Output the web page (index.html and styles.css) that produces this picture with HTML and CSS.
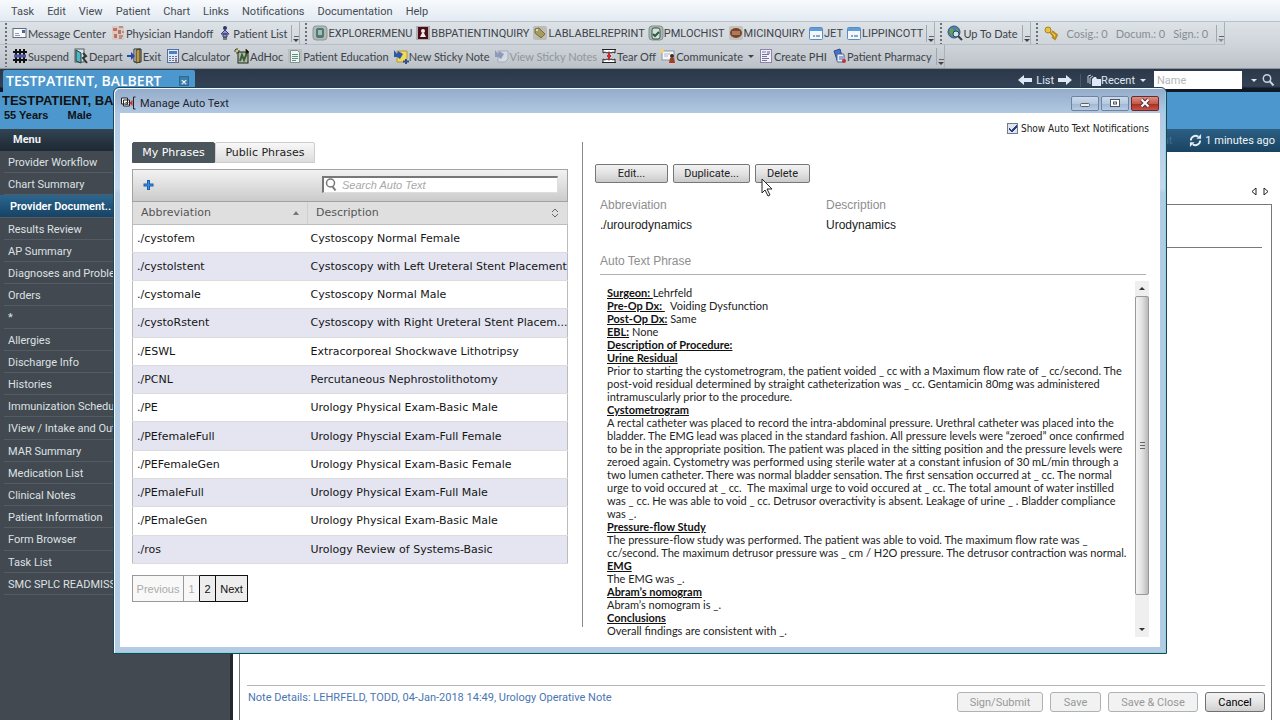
FILE: index.html
```
<!DOCTYPE html>
<html lang="en">
<head>
    <meta charset="UTF-8">
    <meta name="viewport" content="width=device-width, initial-scale=1.0">
    <title>Manage Auto Text</title>
    <link rel="stylesheet" href="styles.css">
</head>
<body>

<nav class="menubar">
    <a href="#">Task</a>
    <a href="#">Edit</a>
    <a href="#">View</a>
    <a href="#">Patient</a>
    <a href="#">Chart</a>
    <a href="#">Links</a>
    <a href="#">Notifications</a>
    <a href="#">Documentation</a>
    <a href="#">Help</a>
</nav>

<div class="toolbar">
    <div class="group">
        <button class="tool"><svg viewBox="0 0 16 16"><rect x="1" y="3.500" width="13" height="9" fill="#f8fafc" stroke="#5f6b80"/><path d="M3 10.500h5M3 8.500h4" stroke="#8d9bb5"/><rect x="10" y="5" width="3" height="3" fill="#4a66a0"/></svg>Message Center</button>
        <button class="tool"><svg viewBox="0 0 16 16"><rect x="2" y="1" width="12" height="14" fill="#d9c9c4"/><path d="M3 3h4v3H3zM8 5h3v4H8zM4 9h3v4H4z" fill="#c0705e"/><path d="M9 2h4M12 7h2M9 11h4M9 13h3" stroke="#8a5c56"/></svg>Physician Handoff</button>
        <button class="tool"><svg viewBox="0 0 16 16"><circle cx="8" cy="3" r="2" fill="#30336e"/><path d="M8 5l4 4H4zM6 9h4v3H6z" fill="#8f95d8" stroke="#3b4070"/><path d="M7 12v3M9 12v3" stroke="#222"/></svg>Patient List</button>
        <span class="more"><i class="caret"></i></span>
    </div>
    <div class="group links">
        <button class="tool"><svg viewBox="0 0 16 16"><rect x="1" y="1" width="14" height="14" rx="3" fill="#b3b9b9" stroke="#8d9595"/><rect x="4" y="3" width="8" height="10" rx="2" fill="#4f7a74"/><rect x="6" y="5" width="4" height="5" fill="#9fc0b6"/></svg>EXPLORERMENU</button>
        <button class="tool"><svg viewBox="0 0 16 16"><rect x="1" y="1" width="14" height="14" fill="#b1aeb0"/><rect x="3" y="2" width="10" height="12" fill="#4b0e16"/><circle cx="8" cy="6" r="2" fill="#eee"/><path d="M5 12l2-4h2l2 4z" fill="#eee"/></svg>BBPATIENTINQUIRY</button>
        <button class="tool"><svg viewBox="0 0 16 16"><rect x="1" y="1" width="14" height="14" rx="2" fill="#bdbdb8"/><path d="M3 4l4-1 6 6-4 4-6-5z" fill="#a59b5c" stroke="#77703c"/><circle cx="5" cy="5" r="1" fill="#eee"/></svg>LABLABELREPRINT</button>
        <button class="tool"><svg viewBox="0 0 16 16"><rect x="1" y="1" width="14" height="14" rx="3" fill="#aeb9b3" stroke="#83918a"/><rect x="4" y="3" width="8" height="11" rx="2" fill="#d5e2da" stroke="#355548"/><path d="M5 9l2 2 4-4" fill="none" stroke="#2c5a46" stroke-width="2"/></svg>PMLOCHIST</button>
        <button class="tool"><svg viewBox="0 0 16 16"><rect x="1" y="1" width="14" height="14" rx="2" fill="#c5c1bd"/><ellipse cx="8" cy="8" rx="6" ry="5" fill="#7a4429"/><path d="M4 7h8M4 9h8" stroke="#dbb291"/></svg>MICINQUIRY</button>
        <button class="tool"><svg viewBox="0 0 16 16"><rect x="1.500" y="2.500" width="13" height="12" rx="1" fill="#f2f7fc" stroke="#5a8cc4"/><path d="M2 3h12v3H2z" fill="#5e9ddb"/><path d="M5 11h2M8 11h4" stroke="#8fa5bd" stroke-width="2"/></svg>JET</button>
        <button class="tool"><svg viewBox="0 0 16 16"><rect x="1.500" y="2.500" width="13" height="12" rx="1" fill="#f2f7fc" stroke="#5a8cc4"/><path d="M2 3h12v3H2z" fill="#5e9ddb"/><path d="M5 11h2M8 11h4" stroke="#8fa5bd" stroke-width="2"/></svg>LIPPINCOTT</button>
        <span class="more"><i class="caret"></i></span>
    </div>
    <div class="group">
        <button class="tool"><svg viewBox="0 0 16 16"><circle cx="7" cy="7" r="6" fill="#4b7fb5" stroke="#375a6e"/><path d="M3 4c3-2 4 0 3 2s3 2 1 5c-3 0-5-3-4-7zM9 3l3 3-2 2z" fill="#62a34a"/><circle cx="9" cy="9" r="3" fill="#cfe4f0" stroke="#33414f"/><path d="M11 11l4 4" stroke="#33414f" stroke-width="2"/></svg>Up To Date</button>
        <span class="more"><i class="caret"></i></span>
    </div>
    <div class="group signs">
        <svg viewBox="0 0 16 16"><circle cx="5" cy="5" r="3" fill="#e9c33d" stroke="#a8811d"/><path d="M7 7l4 5M9 6l5 4-2 4-3-2" fill="#f4d55b" stroke="#b68c22" stroke-width="2"/></svg>
        <span>Cosig.: 0</span>
        <span>Docum.: 0</span>
        <span>Sign.: 0</span>
        <span class="more"><i class="caret"></i></span>
    </div>
</div>

<div class="toolbar lower">
    <div class="group">
        <button class="tool"><svg viewBox="0 0 16 16"><path d="M4 1v14M8 1v14M12 1v14M1 4h14M1 12h14" stroke="#111" stroke-width="2"/><path d="M2 8h12" stroke="#4c54a8" stroke-width="3"/></svg>Suspend</button>
        <button class="tool"><svg viewBox="0 0 16 16"><rect x="2" y="1" width="9" height="13" fill="#d8e6e8" stroke="#545b60"/><path d="M3 2l5 3v10l-5-2z" fill="#4fb7bd" stroke="#1d3d44"/><path d="M10 5l3 3-3 2 4 5" fill="none" stroke="#333" stroke-width="2"/></svg>Depart</button>
        <button class="tool"><svg viewBox="0 0 16 16"><path d="M7 1h7v13H7z" fill="#fff" stroke="#222"/><path d="M9 2l4-1v13l-4 1z" fill="#b99b38" stroke="#333"/><path d="M0 7h4V4l4 4-4 4V9H0z" fill="#2749ad"/></svg>Exit</button>
        <button class="tool"><svg viewBox="0 0 16 16"><rect x="2.500" y="1.500" width="11" height="13" fill="#dfe8f5" stroke="#54719d"/><path d="M4 3h8v3H4z" fill="#4f7fc0"/><path d="M4 8.500h8M4 10.500h8M4 12.500h8" stroke="#5877a5" stroke-dasharray="2 1"/><path d="M10 12.500h2" stroke="#cf3b30" stroke-width="2"/></svg>Calculator</button>
        <button class="tool"><svg viewBox="0 0 16 16"><rect x="4" y="4" width="10" height="11" fill="#a9bd9d" stroke="#222"/><path d="M6 13l2-6 2 5 3-7" fill="none" stroke="#3b5f3c" stroke-width="2"/><path d="M0 3h6M3 0v6M1 1l4 4M12 1l3 3-3 2z" stroke="#3a3f1c"/><circle cx="3" cy="3" r="1" fill="#fff06a"/></svg>AdHoc</button>
        <button class="tool"><svg viewBox="0 0 16 16"><path d="M1 1h14v14H1z" fill="#b9bfc1"/><path d="M3.500 2.500h7l2 2v10h-9z" fill="#eef5f2" stroke="#82918c"/><path d="M5 6.500h6M5 8.500h6M5 10.500h6M5 12.500h4" stroke="#5e8f83"/></svg>Patient Education</button>
        <button class="tool"><svg viewBox="0 0 16 16"><path d="M4 3h10v8l-3 3H4z" fill="#f0d95c" stroke="#b09a34"/><path d="M1 2l3 4 1-3 5 3-3 5-3-2-3 0z" fill="#2c57ad"/><path d="M13 11v5M10 13.500h6" stroke="#31518e" stroke-width="2"/></svg>New Sticky Note</button>
        <button class="tool" disabled><svg viewBox="0 0 16 16"><path d="M4 3h10v8l-3 3H4z" fill="#d5dae4" stroke="#a4adbd"/><path d="M1 2l3 4 1-3 5 3-3 5-3-2-3 0z" fill="#8e9bb8"/></svg>View Sticky Notes</button>
        <button class="tool"><svg viewBox="0 0 16 16"><path d="M1 1.500h14M1 14.500h14M2 2v3l2-1 2 1 2-1 2 1 2-1 2 1V2M2 14v-3l2 1 2-1 2 1 2-1 2 1 2-1v3" fill="#fff" stroke="#222"/><path d="M8 5v6M6 8h4" stroke="#d4232b" stroke-width="2"/></svg>Tear Off</button>
        <button class="tool"><svg viewBox="0 0 16 16"><rect x="2" y="3" width="12" height="9" fill="#f7f7f7" stroke="#8493a8"/><path d="M4 6h6M4 8h4" stroke="#aab4c6"/><circle cx="2" cy="3" r="2" fill="#f5d56c"/><circle cx="12" cy="8" r="2" fill="#3d2b22"/><path d="M9 15l1-5h4l1 5z" fill="#a23c24"/></svg>Communicate <i class="caret"></i></button>
        <button class="tool"><svg viewBox="0 0 16 16"><rect x="2.500" y="1.500" width="11" height="13" fill="#f1f0f8" stroke="#8885a8"/><path d="M4 4h4M4 6.500h7M4 8.500h5M4 10.500h7M4 12.500h5" stroke="#77739c"/><path d="M9 3h3v3H9z" fill="#a8a5cc"/></svg>Create PHI</button>
        <button class="tool"><svg viewBox="0 0 16 16"><path d="M3 3l6-2 2 7-5 4z" fill="#4673c8" stroke="#2e4c8e"/><rect x="6" y="6" width="7" height="8" rx="1" fill="#e8eef8" stroke="#4a62a0"/><path d="M8 9h4M8 11h4" stroke="#4a62a0"/><circle cx="13" cy="13" r="2" fill="#bc3434"/></svg>Patient Pharmacy</button>
        <span class="more"><i class="caret"></i></span>
    </div>
</div>

<header class="chartbar">
    <div class="patient-tab">TESTPATIENT, BALBERT <button class="tab-close" aria-label="Close chart">×</button></div>
    <div class="chart-nav">
        <button aria-label="Previous patient"><svg viewBox="0 0 14 12"><path d="M0 6l6-5v3h8v4H6v3z" fill="#dfe8f2"/></svg></button>
        <a href="#">List</a>
        <button aria-label="Next patient"><svg viewBox="0 0 14 12"><path d="M14 6L8 1v3H0v4h8v3z" fill="#dfe8f2"/></svg></button>
        <button class="recent"><svg viewBox="0 0 14 12"><path d="M1 9V2l3-1M3 10V4l3-2" fill="none" stroke="#c7d3e0"/><path d="M5 5l2-2h2l1 2h4v7H5z" fill="#dfe8f2"/></svg>Recent <i class="caret"></i></button>
        <input class="name-search" type="text" placeholder="Name" aria-label="Name">
        <i class="caret"></i>
        <button aria-label="Search"><svg viewBox="0 0 14 12"><circle cx="6" cy="4.500" r="3.700" fill="none" stroke="#c9d4e1" stroke-width="1.500"/><path d="M8.500 7l4 4.500" stroke="#c9d4e1" stroke-width="2"/></svg></button>
    </div>
</header>

<section class="banner">
    <div class="banner-name">TESTPATIENT, BALBERT</div>
    <div class="banner-info"><span>55 Years</span><span>Male</span></div>
</section>

<div class="workspace">
    <aside class="sidebar">
        <h2>Menu</h2>
        <ul>
            <li><a href="#">Provider Workflow</a></li>
            <li><a href="#">Chart Summary</a></li>
            <li class="current"><a href="#">Provider Document..</a></li>
            <li><a href="#">Results Review</a></li>
            <li><a href="#">AP Summary</a></li>
            <li><a href="#">Diagnoses and Problems</a></li>
            <li><a href="#">Orders</a></li>
            <li><a href="#">*</a></li>
            <li><a href="#">Allergies</a></li>
            <li><a href="#">Discharge Info</a></li>
            <li><a href="#">Histories</a></li>
            <li><a href="#">Immunization Schedule</a></li>
            <li><a href="#">IView / Intake and Output</a></li>
            <li><a href="#">MAR Summary</a></li>
            <li><a href="#">Medication List</a></li>
            <li><a href="#">Clinical Notes</a></li>
            <li><a href="#">Patient Information</a></li>
            <li><a href="#">Form Browser</a></li>
            <li><a href="#">Task List</a></li>
            <li><a href="#">SMC SPLC READMISSION</a></li>
        </ul>
    </aside>
    <main class="chart">
        <div class="refresh">
            <span class="print">nt</span>
            <svg viewBox="0 0 14 14"><path d="M2 7a5 5 0 0 1 8-4M12 7a5 5 0 0 1-8 4" fill="none" stroke="#e4edf4" stroke-width="2"/><path d="M8 5h5V0zM6 9H1v5z" fill="#e4edf4"/></svg>
            1 minutes ago
        </div>
        <div class="pane-arrows">
            <svg viewBox="0 0 6 9"><path d="M5 1v7L1 4.500z" fill="none" stroke="#222"/></svg>
            <svg viewBox="0 0 6 9"><path d="M1 1v7l4-3.500z" fill="none" stroke="#222"/></svg>
        </div>
        <div class="note">
            <div class="note-head"></div>
            <footer class="note-foot">
                <p>Note Details: LEHRFELD, TODD, 04-Jan-2018 14:49, Urology Operative Note</p>
                <div class="note-actions">
                    <button disabled class="w-sign">Sign/Submit</button>
                    <button disabled class="w-save">Save</button>
                    <button disabled class="w-close">Save &amp; Close</button>
                    <button class="w-cancel">Cancel</button>
                </div>
            </footer>
        </div>
    </main>
</div>

<div class="dialog" role="dialog" aria-labelledby="dialog-title">
    <div class="titlebar">
        <svg viewBox="0 0 16 14"><path d="M1 2h6v6H1zM3 4h6v6H3z" fill="#fff" stroke="#222"/><path d="M5 6.500h3M5 8.500h3" stroke="#555"/><path d="M9 7l3-3v6z" fill="#d3272f"/><path d="M15 1h-2v12h2" fill="none" stroke="#222"/></svg>
        <h1 id="dialog-title">Manage Auto Text</h1>
        <button class="win" aria-label="Minimize"><svg viewBox="0 0 12 10"><rect x="1.500" y="5.500" width="9" height="3" rx="1" fill="#eee" stroke="#59616d"/></svg></button>
        <button class="win" aria-label="Maximize"><svg viewBox="0 0 12 10"><rect x="1.500" y="1.500" width="9" height="7" fill="#fff" stroke="#4c545f"/><rect x="4.500" y="4" width="3" height="2" fill="#fff" stroke="#4c545f"/></svg></button>
        <button class="win close" aria-label="Close"><svg viewBox="0 0 12 10"><path d="M2.500 1.500l7 7M9.500 1.500l-7 7" stroke="#5a3338" stroke-width="4"/><path d="M2.500 1.500l7 7M9.500 1.500l-7 7" stroke="#fff" stroke-width="2"/></svg></button>
    </div>
    <div class="dialog-body">
        <section class="phrases">
            <div class="tabs">
                <button class="tab active">My Phrases</button>
                <button class="tab">Public Phrases</button>
            </div>
            <div class="phrase-tools">
                <button class="add" aria-label="Add phrase"><svg viewBox="0 0 12 12"><path d="M6 1v10M1 6h10" stroke="#1c5fae" stroke-width="3"/><path d="M6 2v8M2 6h8" stroke="#3f8fe0"/></svg></button>
                <label class="search">
                    <svg viewBox="0 0 14 14"><circle cx="6.500" cy="5" r="4" fill="none" stroke="#777" stroke-width="1.500"/><path d="M8.500 8.500l3 4" stroke="#777" stroke-width="2"/></svg>
                    <input type="text" placeholder="Search Auto Text">
                </label>
            </div>
            <table>
                <thead>
                    <tr>
                        <th class="col-abbr"><div>Abbreviation <i class="sort-up"></i></div></th>
                        <th><div>Description <svg viewBox="0 0 8 12"><path d="M1 5l3-3 3 3M1 7l3 3 3-3" fill="none" stroke="#666"/></svg></div></th>
                    </tr>
                </thead>
                <tbody>
                    <tr><td>./cystofem</td><td>Cystoscopy Normal Female</td></tr>
                    <tr><td>./cystolstent</td><td>Cystoscopy with Left Ureteral Stent Placement</td></tr>
                    <tr><td>./cystomale</td><td>Cystoscopy Normal Male</td></tr>
                    <tr><td>./cystoRstent</td><td>Cystoscopy with Right Ureteral Stent Placem...</td></tr>
                    <tr><td>./ESWL</td><td>Extracorporeal Shockwave Lithotripsy</td></tr>
                    <tr><td>./PCNL</td><td>Percutaneous Nephrostolithotomy</td></tr>
                    <tr><td>./PE</td><td>Urology Physical Exam-Basic Male</td></tr>
                    <tr><td>./PEfemaleFull</td><td>Urology Physcial Exam-Full Female</td></tr>
                    <tr><td>./PEFemaleGen</td><td>Urology Physical Exam-Basic Female</td></tr>
                    <tr><td>./PEmaleFull</td><td>Urology Physical Exam-Full Male</td></tr>
                    <tr><td>./PEmaleGen</td><td>Urology Physical Exam-Basic Male</td></tr>
                    <tr><td>./ros</td><td>Urology Review of Systems-Basic</td></tr>
                </tbody>
            </table>
            <div class="pager">
                <button class="off prev">Previous</button>
                <button class="off">1</button>
                <button>2</button>
                <button class="next">Next</button>
            </div>
        </section>

        <section class="detail">
            <label class="notify"><input type="checkbox" checked> Show Auto Text Notifications</label>
            <div class="actions">
                <button class="w-edit">Edit...</button>
                <button class="w-dup">Duplicate...</button>
                <button class="w-del">Delete</button>
            </div>
            <dl>
                <div><dt>Abbreviation</dt><dd>./urourodynamics</dd></div>
                <div><dt>Description</dt><dd>Urodynamics</dd></div>
            </dl>
            <h2>Auto Text Phrase</h2>
            <div class="phrase">
                <div class="phrase-text">
                    <p><b>Surgeon: </b>Lehrfeld</p>
                    <p><b>Pre-Op Dx:&nbsp;</b>&nbsp; Voiding Dysfunction</p>
                    <p><b>Post-Op Dx:</b> Same</p>
                    <p><b>EBL:</b> None</p>
                    <p><b>Description of Procedure:</b></p>
                    <p><b>Urine Residual</b></p>
                    <p>Prior to starting the cystometrogram, the patient voided _ cc with a Maximum flow rate of _ cc/second. The<br>
                    post-void residual determined by straight catheterization was _ cc. Gentamicin 80mg was administered<br>
                    intramuscularly prior to the procedure.</p>
                    <p><b>Cystometrogram</b></p>
                    <p>A rectal catheter was placed to record the intra-abdominal pressure. Urethral catheter was placed into the<br>
                    bladder. The EMG lead was placed in the standard fashion. All pressure levels were “zeroed” once confirmed<br>
                    to be in the appropriate position. The patient was placed in the sitting position and the pressure levels were<br>
                    zeroed again. Cystometry was performed using sterile water at a constant infusion of 30 mL/min through a<br>
                    two lumen catheter. There was normal bladder sensation. The first sensation occurred at _ cc. The normal<br>
                    urge to void occured at _ cc.&nbsp; The maximal urge to void occured at _ cc. The total amount of water instilled<br>
                    was _ cc. He was able to void _ cc. Detrusor overactivity is absent. Leakage of urine _ . Bladder compliance<br>
                    was _.</p>
                    <p><b>Pressure-flow Study</b></p>
                    <p>The pressure-flow study was performed. The patient was able to void. The maximum flow rate was _<br>
                    cc/second. The maximum detrusor pressure was _ cm / H2O pressure. The detrusor contraction was normal.</p>
                    <p><b>EMG</b></p>
                    <p>The EMG was _.</p>
                    <p><b>Abram’s nomogram</b></p>
                    <p>Abram’s nomogram is _.</p>
                    <p><b>Conclusions</b></p>
                    <p>Overall findings are consistent with _.</p>
                </div>
                <div class="scroll">
                    <i class="arrow up"></i>
                    <div class="thumb"></div>
                    <i class="arrow down"></i>
                </div>
            </div>
        </section>
    </div>
</div>

<svg class="pointer" viewBox="0 0 12 19"><path d="M1 1v14l3-3 3 6 2-1-3-6h5z" fill="#fff" stroke="#222"/></svg>

</body>
</html>
```

FILE: styles.css
```
* {
    box-sizing: border-box;
}
body {
    margin: 0;
    min-height: 100vh;
    display: flex;
    flex-direction: column;
    position: relative;
    overflow: hidden;
    font-family: Roboto, "Open Sans", sans-serif;
    font-size: 11px;
    background: #fff;
}
a {
    color: inherit;
    text-decoration: none;
}
button {
    font: inherit;
    color: inherit;
    padding: 0;
    margin: 0;
    border: none;
    background: none;
}
h1, h2, p, ul, dl, dd {
    margin: 0;
    padding: 0;
}
svg {
    flex: none;
}

/* menus and toolbars */
.menubar {
    display: flex;
    gap: 13px;
    height: 22px;
    padding-left: 11px;
    line-height: 24px;
    color: #454b52;
    background: linear-gradient(#f7fafd, #e3eaf2);
    border-bottom: 1px solid #b9c0c7;
}
.toolbar {
    display: flex;
    height: 23px;
    font-family: Lato, Roboto, sans-serif;
    color: #3d434a;
    background: linear-gradient(#dde2e7, #ced4d9);
}
.toolbar.lower {
    height: 24px;
    background: linear-gradient(#ced4d9, #bcc2c7);
    border-bottom: 1px solid #8b939b;
}
.group {
    display: flex;
    align-items: center;
    gap: 4px;
    padding-left: 12px;
    border-right: 1px solid #aab1b8;
    border-bottom: 1px solid #b7bec4;
    background: radial-gradient(circle, #697078 1px, transparent 1px) 4px 4px / 4px 4px repeat-y;
}
.group svg {
    width: 16px;
    height: 16px;
}
.links {
    gap: 3px;
    font-family: Roboto, sans-serif;
}
.tool {
    display: flex;
    align-items: center;
    white-space: nowrap;
}
.tool:disabled {
    color: #8f969d;
}
.signs {
    gap: 8px;
    color: #868d94;
}
.more {
    display: flex;
    align-items: flex-end;
    width: 8px;
    height: 17px;
    border-left: 1px solid #a0a7ae;
    background: linear-gradient(#666, #666) 2px 11px / 5px 1px no-repeat;
}
.caret {
    display: inline-block;
    margin-left: 5px;
    border: 3px solid transparent;
    border-top-color: currentColor;
    border-bottom: none;
}
.more .caret {
    margin-left: 1px;
}

/* open chart */
.chartbar {
    display: flex;
    justify-content: space-between;
    height: 23px;
    padding: 1px 5px 0 3px;
    color: #dfe8f2;
    background: linear-gradient(#2b3849, #344256 75%, #0f1a26 85%);
}
.patient-tab {
    display: flex;
    align-items: center;
    justify-content: space-between;
    width: 192px;
    padding: 0 6px 0 3px;
    font-family: "Open Sans", sans-serif;
    font-size: 14px;
    line-height: 20px;
    font-weight: 600;
    color: #fff;
    background: #4c98ce;
    border-radius: 2px 2px 0 0;
}
.tab-close {
    width: 10px;
    height: 10px;
    font-size: 11px;
    line-height: 9px;
    background: #3b7eaa;
    border: 1px solid #2c6a95;
}
.chart-nav {
    display: flex;
    align-items: center;
    gap: 4px;
    height: 20px;
}
.chart-nav button {
    display: flex;
    align-items: center;
}
.chart-nav svg {
    width: 14px;
    height: 12px;
}
.recent {
    border-left: 1px solid #4b5868;
    margin-left: 4px;
}
.chart-nav .recent {
    padding-left: 6px;
}
.name-search {
    width: 88px;
    height: 18px;
    margin-left: 4px;
    padding: 0 3px;
    border: none;
    font: inherit;
}
.name-search::placeholder {
    color: #b6b6b6;
}
.banner {
    height: 37px;
    padding-left: 2px;
    font-family: "Liberation Sans", Arial, sans-serif;
    font-weight: bold;
    color: #111;
    background: #4c98ce;
}
.banner-name {
    font-size: 13px;
    line-height: 17px;
}
.banner-info {
    display: flex;
    gap: 19px;
    padding-left: 2px;
    font-size: 11px;
    line-height: 13px;
}

.workspace {
    display: flex;
    flex: 1;
}
.sidebar {
    width: 233px;
    flex: none;
    color: #dde1e4;
    background: #424950;
    border-right: 3px solid #23272e;
}
.sidebar h2 {
    height: 22px;
    padding-left: 13px;
    font-size: 11px;
    font-weight: 700;
    line-height: 22px;
    color: #f0f3f6;
    background: linear-gradient(#334453, #1d2832);
}
.sidebar ul {
    display: flex;
    flex-direction: column;
    height: 444px;
    list-style: none;
}
.sidebar li {
    flex: 1;
    margin-left: 4px;
    padding: 2px 0 0 4px;
    line-height: 19px;
    white-space: nowrap;
    border-bottom: 1px solid #535b63;
}
.sidebar .current {
    margin-left: 0;
    padding-left: 10px;
    font-weight: 600;
    color: #fff;
    background: linear-gradient(#2b6690, #174264);
}
.chart {
    display: flex;
    flex-direction: column;
    flex: 1;
}
.refresh {
    display: flex;
    align-items: center;
    justify-content: flex-end;
    gap: 3px;
    height: 23px;
    padding-right: 5px;
    color: #eef4f8;
    background: linear-gradient(#2b5f84, #1a4361);
}
.refresh svg {
    width: 13px;
    height: 13px;
}
.print {
    margin-right: 14px;
    color: #41708f;
}
.pane-arrows {
    display: flex;
    align-items: center;
    justify-content: flex-end;
    gap: 6px;
    height: 52px;
    padding: 26px 11px 0 0;
}
.pane-arrows svg {
    width: 6px;
    height: 9px;
}
.note {
    display: flex;
    flex-direction: column;
    justify-content: space-between;
    flex: 1;
    margin: 0 8px 0 6px;
    padding: 0 6px 0 7px;
    border: 1px solid #77797c;
    border-bottom: none;
}
.note-head {
    height: 43px;
    margin-right: 3px;
    border-bottom: 1px solid #77797c;
}
.note-foot {
    display: flex;
    justify-content: space-between;
    height: 35px;
    border-top: 1px solid #b5b5b5;
}
.note-foot p {
    padding-left: 1px;
    line-height: 24px;
    color: #4a76b4;
}
.note-actions {
    display: flex;
    gap: 7px;
    padding-top: 6px;
}
.note-actions button {
    height: 20px;
    border: 1px solid #707070;
    border-radius: 3px;
    background: linear-gradient(#f3f3f3, #e6e6e6 50%, #cfcfcf);
}
.note-actions button:disabled {
    color: #989898;
    border-color: #adb2b5;
    background: #f2f2f2;
}
.w-sign { width: 86px; }
.w-save { width: 51px; }
.w-close { width: 90px; }
.w-cancel { width: 60px; }

/* dialog, floats over the chart */
.dialog {
    position: absolute;
    top: 87px;
    left: 113px;
    right: 113px;
    display: flex;
    flex-direction: column;
    padding: 0 6px 6px;
    border: 1px solid #1f4654;
    border-radius: 6px 6px 0 0;
    background: linear-gradient(#93abc9, #b3c9e3 26px, #c3d8ee 100px, #b4cbe4 105px);
    box-shadow: inset 1px 1px 0 #f2f8fd, inset -1px -1px 0 #86d3e6;
}
.titlebar {
    display: flex;
    flex: none;
    align-items: center;
    gap: 2px;
    height: 25px;
    padding: 5px 1px 0 0;
}
.titlebar > svg {
    width: 17px;
    height: 14px;
}
.titlebar h1 {
    flex: 1;
    padding-left: 1px;
    font-size: 11px;
    font-weight: 400;
    color: #1f242b;
}
.win {
    display: flex;
    align-items: center;
    justify-content: center;
    width: 28px;
    height: 15px;
    border: 1px solid #6d83a0;
    border-radius: 2px;
    background: linear-gradient(#ccdbed, #b6c9df 50%, #9fb5d0 50%, #b8cce2);
}
.win svg {
    width: 12px;
    height: 10px;
}
.win.close {
    border-color: #6b2a2a;
    background: linear-gradient(#d99085, #c35a4b 50%, #a82a1d 50%, #c4564a);
}
.dialog-body {
    display: flex;
    flex: 1;
    padding: 0 11px 10px 12px;
    background: #fff;
}

/* phrase list */
.phrases {
    width: 436px;
    flex: none;
    padding-top: 29px;
    font-family: "DejaVu Sans", Verdana, sans-serif;
}
.tabs {
    display: flex;
    height: 21px;
}
.tab {
    width: 100px;
    color: #222;
    background: linear-gradient(#f8f8f8, #dcdcdc);
    border: 1px solid #cdcdcd;
    border-radius: 2px 2px 0 0;
}
.tab.active {
    width: 83px;
    color: #fff;
    background: #4a555c;
    border-color: #4a555c;
}
.phrase-tools {
    display: flex;
    align-items: center;
    justify-content: space-between;
    height: 33px;
    margin-top: 6px;
    padding: 0 9px 3px;
    border: 1px solid #a2a2a2;
    background: linear-gradient(#f2f2f2, #cbcbcb);
}
.add {
    padding-top: 5px;
}
.add svg {
    width: 13px;
    height: 12px;
}
.search {
    display: flex;
    align-items: center;
    width: 236px;
    height: 17px;
    background: #fff;
    border: 1px solid #ddd;
    border-top: 2px solid #777;
    border-left: 2px solid #777;
}
.search svg {
    width: 14px;
    height: 14px;
}
.search input {
    flex: 1;
    min-width: 0;
    height: 14px;
    padding: 0 4px;
    border: none;
    font: italic 11px "Liberation Sans", Arial, sans-serif;
}
.search input::placeholder {
    color: #a8a8a8;
}
table {
    width: 100%;
    height: 362px;
    table-layout: fixed;
    border-collapse: collapse;
    border: 1px solid #bbb;
    border-top: none;
}
.col-abbr {
    width: 175px;
}
th {
    height: 22px;
    padding: 0 8px;
    font-weight: 400;
    text-align: left;
    color: #555;
    background: #dfdfdf;
    border-bottom: 1px solid #bdbdbd;
    border-right: 1px solid #cfcfcf;
}
th div {
    display: flex;
    align-items: center;
    justify-content: space-between;
}
th svg {
    width: 8px;
    height: 12px;
}
.sort-up {
    border: 3px solid transparent;
    border-bottom: 4px solid #777;
    border-top: none;
}
td {
    padding: 0 0 0 4px;
    white-space: nowrap;
    color: #151515;
    border-bottom: 1px solid #dcdcdc;
}
td + td {
    padding-left: 3px;
}
tbody tr:nth-child(even) {
    background: #e4e5f1;
}
.pager {
    display: flex;
    margin-top: 11px;
    font-family: "Liberation Sans", Arial, sans-serif;
    font-size: 11px;
}
.pager button {
    width: 16px;
    height: 27px;
    color: #111;
    border: 1px solid #111;
    border-left: none;
    background: #ededed;
}
.pager .off {
    color: #ababab;
    background: #f8f8f8;
    border-color: #999;
}
.pager .off + .off {
    border-right-color: #111;
}
.pager .prev {
    width: 52px;
    border-left: 1px solid #999;
}
.pager .next {
    width: 32px;
}

/* selected phrase */
.detail {
    display: flex;
    flex-direction: column;
    flex: 1;
    min-width: 0;
    position: relative;
    margin: 29px 0 10px 14px;
    padding: 22px 0 0 12px;
    border-left: 1px solid #8a8a8a;
}
.notify {
    position: absolute;
    top: -19px;
    right: 0;
    display: flex;
    align-items: center;
    gap: 3px;
    font-family: "DejaVu Sans Condensed", Tahoma, sans-serif;
    font-size: 10px;
    color: #222;
}
.notify input {
    appearance: none;
    width: 11px;
    height: 11px;
    margin: 0;
    border: 1px solid #6f7c8a;
    background: #dfe5ef;
}
.notify input:checked {
    background: linear-gradient(135deg, transparent 45%, #2c3f7d 45% 65%, transparent 65%) 3px 1px / 6px 7px no-repeat, linear-gradient(45deg, transparent 35%, #2c3f7d 35% 70%, transparent 70%) 1px 4px / 3px 4px no-repeat, #dfe5ef;
}
.actions {
    display: flex;
    gap: 5px;
}
.actions button {
    height: 19px;
    font-size: 11px;
    color: #222;
    border: 1px solid #777;
    border-radius: 2px;
    background: linear-gradient(#f2f2f2, #e2e2e2 50%, #cacaca);
}
.w-edit { width: 73px; }
.w-dup { width: 77px; }
.w-del { width: 55px; }
.detail dl {
    display: grid;
    grid-template-columns: 226px 1fr;
    margin-top: 12px;
    padding-left: 5px;
    font: 12px/20px "Liberation Sans", Arial, sans-serif;
    color: #222;
}
.detail dt, .detail h2 {
    color: #8e8e8e;
}
.detail h2 {
    margin: 14px 3px 0 5px;
    padding-bottom: 1px;
    font: 12px/24px "Liberation Sans", Arial, sans-serif;
    border-bottom: 1px solid #b0b0b0;
}
.phrase {
    display: flex;
    justify-content: space-between;
    margin: 6px 0 -10px;
}
.phrase-text {
    flex: 1;
    min-width: 0;
    padding: 5px 0 0 12px;
    font-family: Lato, Tahoma, sans-serif;
    font-size: 11px;
    line-height: 13px;
    white-space: nowrap;
    color: #222;
}
.phrase-text b {
    color: #111;
    text-decoration: underline;
}
.scroll {
    display: flex;
    flex-direction: column;
    flex: none;
    align-items: center;
    width: 14px;
    height: 356px;
    background: #efefef;
}
.thumb {
    width: 14px;
    height: 299px;
    border: 1px solid #999;
    border-radius: 2px;
    background: linear-gradient(#666, #666) 4px 145px / 5px 1px no-repeat, linear-gradient(#666, #666) 4px 148px / 5px 1px no-repeat, linear-gradient(#666, #666) 4px 151px / 5px 1px no-repeat, linear-gradient(90deg, #f5f5f5, #e2e2e2 50%, #b9b9b9);
}
.arrow {
    border: 3px solid transparent;
}
.arrow.up {
    margin: 6px 0;
    border-bottom-color: #333;
    border-top: none;
}
.arrow.down {
    margin: auto 0 6px;
    border-top-color: #333;
    border-bottom: none;
}
.pointer {
    position: absolute;
    left: 761px;
    top: 178px;
    width: 12px;
    height: 19px;
}
```
